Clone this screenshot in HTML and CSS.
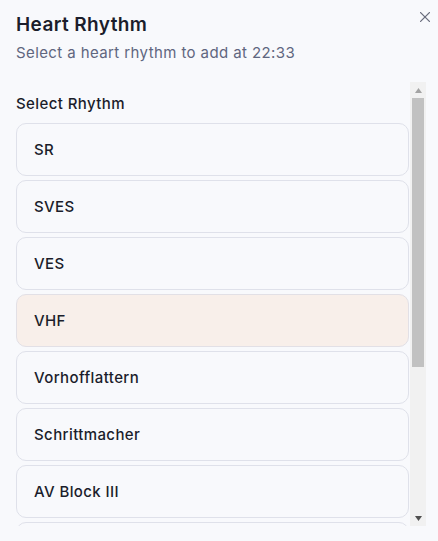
FILE: index.html
```html
<!DOCTYPE html>
<html lang="en">
<head>
<meta charset="utf-8">
<title>Heart Rhythm</title>
<link rel="stylesheet" href="styles.css">
</head>
<body>
<div class="dialog">
  <button class="close" aria-label="Close">
    <svg width="10" height="10" viewBox="0 0 10 10"><path d="M0.6 0.6L9.4 9.4M9.4 0.6L0.6 9.4" stroke="#6b6e7e" stroke-width="1.3" stroke-linecap="round"/></svg>
  </button>
  <h2 class="title">Heart Rhythm</h2>
  <p class="subtitle">Select a heart rhythm to add at 22:33</p>
  <div class="scroll-wrap">
    <div class="scroll">
      <div class="label">Select Rhythm</div>
      <div class="list">
        <div class="item">SR</div>
        <div class="item">SVES</div>
        <div class="item">VES</div>
        <div class="item active">VHF</div>
        <div class="item">Vorhofflattern</div>
        <div class="item">Schrittmacher</div>
        <div class="item">AV Block III</div>
        <div class="item"></div>
      </div>
    </div>
    <div class="scrollbar" aria-hidden="true">
      <div class="sb-btn">
        <svg width="7" height="5" viewBox="0 0 7 5"><path d="M0 5L3.5 0L7 5Z" fill="#a3a3a3"/></svg>
      </div>
      <div class="sb-track"><div class="sb-thumb"></div></div>
      <div class="sb-btn">
        <svg width="7" height="5" viewBox="0 0 7 5"><path d="M0 0L7 0L3.5 5Z" fill="#505050"/></svg>
      </div>
    </div>
  </div>
</div>
</body>
</html>
```

FILE: styles.css
```css
* { box-sizing: border-box; }
html, body { margin: 0; padding: 0; }
body {
  background: #f8f9fc;
  font-family: Inter, "Noto Sans", sans-serif;
  color: #1b1d2b;
  width: 438px;
  height: 541px;
  overflow: hidden;
}
.dialog {
  position: relative;
  padding: 12px 12px 0 16px;
}
.close {
  position: absolute;
  top: 12px;
  right: 8px;
  width: 10px;
  height: 10px;
  padding: 0;
  border: 0;
  background: none;
  display: flex;
}
.title {
  margin: 0;
  font-size: 19px;
  line-height: 26px;
  font-weight: 600;
  letter-spacing: 0.4px;
  color: #1b1d2b;
}
.subtitle {
  margin: 5px 0 0;
  font-size: 15px;
  line-height: 20px;
  letter-spacing: 0.4px;
  color: #60667f;
}
.scroll-wrap {
  margin-top: 19px;
  height: 444px;
  display: flex;
}
.scroll {
  flex: 1;
  min-width: 0;
  overflow: hidden;
  padding: 12px 1px 0 0;
}
.scrollbar {
  width: 16px;
  flex: none;
  display: flex;
  flex-direction: column;
  background: #f1f1f1;
}
.sb-btn {
  height: 16px;
  flex: none;
  display: flex;
  align-items: center;
  justify-content: center;
}
.sb-track {
  flex: 1;
  padding: 0 2px;
}
.sb-thumb {
  height: 269px;
  background: #c1c1c1;
}
.label {
  font-size: 15px;
  font-weight: 500;
  line-height: 20px;
  letter-spacing: 0.4px;
  margin-bottom: 9px;
  color: #1b1d2b;
}
.list {
  display: flex;
  flex-direction: column;
  gap: 4px;
}
.item {
  height: 53px;
  flex: none;
  border: 1px solid #dfe1ea;
  border-radius: 10px;
  background: #f8f9fc;
  padding: 0 17px 1px;
  display: flex;
  align-items: center;
  font-size: 15px;
  font-weight: 500;
  letter-spacing: 0.4px;
  color: #1b1d2b;
}
.item.active {
  background: #f8efea;
  border-color: #e2e0e6;
}
```
